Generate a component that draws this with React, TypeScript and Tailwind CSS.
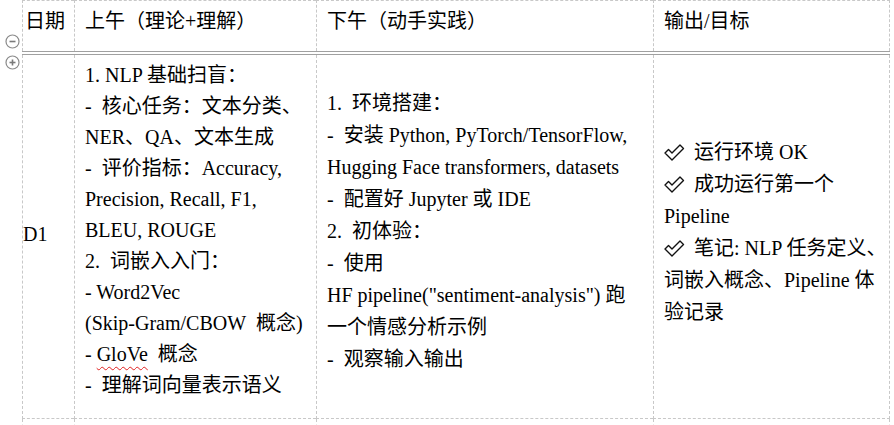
import React from "react";

const col2 = [
  "1. NLP 基础扫盲：",
  "-\u00a0 核心任务：文本分类、",
  "NER、QA、文本生成",
  "-\u00a0 评价指标：Accuracy,",
  "Precision, Recall, F1,",
  "BLEU, ROUGE",
  "2.\u00a0 词嵌入入门：",
  "- Word2Vec",
  "(Skip-Gram/CBOW\u00a0 概念)",
  "GLOVE",
  "-\u00a0 理解词向量表示语义",
];

const col3 = [
  "1.\u00a0 环境搭建：",
  "-\u00a0 安装 Python, PyTorch/TensorFlow,",
  "Hugging Face transformers, datasets",
  "-\u00a0 配置好 Jupyter 或 IDE",
  "2.\u00a0 初体验：",
  "-\u00a0 使用",
  'HF pipeline("sentiment-analysis") 跑',
  "一个情感分析示例",
  "-\u00a0 观察输入输出",
];

const col4 = [
  { check: true, text: "运行环境 OK" },
  { check: true, text: "成功运行第一个" },
  { check: false, text: "Pipeline" },
  { check: true, text: "笔记: NLP 任务定义、" },
  { check: false, text: "词嵌入概念、Pipeline 体" },
  { check: false, text: "验记录" },
];

function Check() {
  return (
    <svg width="21" height="17" viewBox="0 0 21 17" className="mr-[9px] shrink-0">
      <path
        d="M1 9 L4.5 5.5 L8 9 L16 1 L19.5 4.5 L8 16 Z"
        fill="white"
        stroke="#111"
        strokeWidth="1.4"
        strokeLinejoin="round"
      />
    </svg>
  );
}

function Toggle({ plus }: { plus?: boolean }) {
  return (
    <svg width="15" height="15" viewBox="0 0 15 15">
      <circle cx="7.5" cy="7.5" r="6.5" fill="white" stroke="#8a8a8a" strokeWidth="1.2" />
      <line x1="4.5" y1="7.5" x2="10.5" y2="7.5" stroke="#7a7a7a" strokeWidth="1.6" />
      {plus && <line x1="7.5" y1="4.5" x2="7.5" y2="10.5" stroke="#7a7a7a" strokeWidth="1.6" />}
    </svg>
  );
}

export default function App() {
  const cell = "border-l border-dashed border-[#c8c8c8]";

  return (
    <div className="relative w-[894px] h-[425px] overflow-hidden bg-white text-black text-[20px] font-['Liberation_Serif','Noto_Sans_CJK_SC',serif]">
      {/* row collapse / expand handles */}
      <div className="absolute left-[5px] top-[34px]">
        <Toggle />
      </div>
      <div className="absolute left-[5px] top-[55px]">
        <Toggle plus />
      </div>

      <div className="ml-[22px] grid grid-cols-[52px_242px_337px_237px]">
        {/* header */}
        <div className={`${cell} border-t h-[51px] pt-[5px] pl-[2px] leading-[31px]`}>日期</div>
        <div className={`${cell} border-t h-[51px] pt-[5px] px-[10px] leading-[31px]`}>上午（理论+理解）</div>
        <div className={`${cell} border-t h-[51px] pt-[5px] px-[10px] leading-[31px]`}>下午（动手实践）</div>
        <div className={`${cell} border-t border-r h-[51px] pt-[5px] px-[10px] leading-[31px]`}>输出/目标</div>

        <div className="col-span-4 h-[4px] border-y border-[#a0a0a0]" />

        {/* D1 */}
        <div className={`${cell} border-b h-[364px] pt-[5px] pb-[10px] flex items-center leading-[31px]`}>D1</div>

        <div className={`${cell} border-b h-[364px] pt-[5px] px-[10px] leading-[31px]`}>
          {col2.map((line, i) =>
            line === "GLOVE" ? (
              <div key={i} className="whitespace-nowrap">
                -{" "}
                <span className="underline decoration-wavy decoration-[#e02020] decoration-1 underline-offset-[5px]">
                  GloVe
                </span>
                {"\u00a0 概念"}
              </div>
            ) : (
              <div key={i} className="whitespace-nowrap">
                {line}
              </div>
            )
          )}
        </div>

        <div className={`${cell} border-b h-[364px] pt-[5px] pb-[16px] px-[10px] flex flex-col justify-center leading-[32px]`}>
          {col3.map((line, i) => (
            <div key={i} className="whitespace-nowrap">
              {line}
            </div>
          ))}
        </div>

        <div className={`${cell} border-b border-r h-[364px] pt-[5px] pb-[14px] px-[10px] flex flex-col justify-center leading-[32px]`}>
          {col4.map((row, i) => (
            <div key={i} className="flex items-center whitespace-nowrap">
              {row.check && <Check />}
              <span>{row.text}</span>
            </div>
          ))}
        </div>

        {/* next row (cut off) */}
        <div className={`${cell} h-[20px]`} />
        <div className={`${cell} h-[20px]`} />
        <div className={`${cell} h-[20px]`} />
        <div className={`${cell} border-r h-[20px]`} />
      </div>
    </div>
  );
}
